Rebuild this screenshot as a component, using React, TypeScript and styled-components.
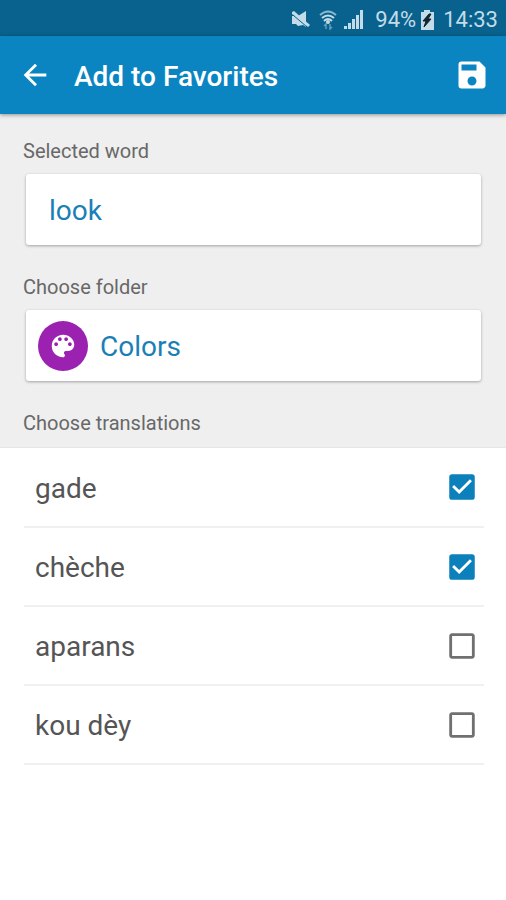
import React, { useState } from 'react';
import styled, { createGlobalStyle } from 'styled-components';
import {
  MdArrowBack,
  MdCheckBox,
  MdCheckBoxOutlineBlank,
  MdSave,
} from 'react-icons/md';

const GlobalStyle = createGlobalStyle`
  *, *::before, *::after { box-sizing: border-box; }
  body {
    margin: 0;
    background: #ffffff;
    font-family: Roboto, 'Liberation Sans', sans-serif;
  }
  button, input { font-family: inherit; }
`;

const Screen = styled.div`
  display: flex;
  flex-direction: column;
  min-height: 100vh;
  background: #ffffff;
`;

const StatusBar = styled.div`
  display: flex;
  align-items: center;
  justify-content: flex-end;
  height: 36px;
  padding: 3px 8px 0 0;
  background: #08628d;
  color: #c3dce8;
  font-size: 22px;
  line-height: 32px;

  svg { display: block; flex: none; }
`;

const StatusIcon = styled.span<{ $gap: number }>`
  margin-right: ${({ $gap }) => $gap}px;
`;

const StatusText = styled.span<{ $gap?: number }>`
  margin-right: ${({ $gap = 0 }) => $gap}px;
`;

const AppBar = styled.header`
  position: relative;
  display: flex;
  align-items: center;
  height: 78px;
  padding: 0 16px 0 17px;
  background: #0b85c1;
  color: #ffffff;
  box-shadow: 0 1px 4px rgba(0, 0, 0, 0.4);
`;

const IconButton = styled.button`
  display: grid;
  place-items: center;
  width: 36px;
  height: 48px;
  padding: 0;
  border: 0;
  background: none;
  color: inherit;
  cursor: pointer;
`;

const Title = styled.h1`
  flex: 1;
  margin: 0 0 0 21px;
  padding-top: 4px;
  font-size: 28px;
  font-weight: 500;
  line-height: 36px;
`;

const Form = styled.section`
  display: flex;
  flex-direction: column;
  gap: 30px;
  padding: 25px 23px 12px;
  background: #efefef;
  border-bottom: 1px solid #e6e6e6;
`;

const Field = styled.div`
  display: flex;
  flex-direction: column;
  gap: 11px;
`;

const labelStyle = `
  color: #686868;
  font-size: 20px;
  font-weight: 400;
  line-height: 24px;
`;

const FieldLabel = styled.label`
  ${labelStyle}
`;

const ListHeading = styled.h2`
  ${labelStyle}
  margin: 0;
`;

const cardStyle = `
  height: 71px;
  margin: 0 2px 0 3px;
  border: 0;
  border-radius: 3px;
  background: #ffffff;
  box-shadow: 0 1px 3px rgba(0, 0, 0, 0.32);
  color: #1b7fb6;
  font-size: 28px;
  line-height: 36px;
`;

const WordInput = styled.input`
  ${cardStyle}
  min-width: 0;
  padding: 2px 23px 0;
`;

const FolderButton = styled.button`
  ${cardStyle}
  display: flex;
  align-items: center;
  gap: 12px;
  padding: 0 12px;
  text-align: left;
  cursor: pointer;
`;

const FolderBadge = styled.span`
  display: grid;
  place-items: center;
  width: 50px;
  height: 50px;
  border-radius: 50%;
  background: #9b21b1;
  color: #ffffff;
`;

const FolderName = styled.span`
  padding-top: 2px;
`;

const TranslationList = styled.ul`
  margin: 0;
  padding: 0 22px 0 24px;
  list-style: none;
`;

const TranslationItem = styled.li`
  border-bottom: 2px solid #f0f0f0;
`;

const TranslationRow = styled.label`
  display: flex;
  align-items: center;
  justify-content: space-between;
  height: 78px;
  padding: 0 5px 0 11px;
  color: #555555;
  font-size: 28px;
  line-height: 36px;
  cursor: pointer;

  ${TranslationItem} + ${TranslationItem} & { height: 77px; }
`;

const TranslationWord = styled.span`
  padding-top: 3px;
`;

const CheckSlot = styled.span<{ $checked: boolean }>`
  display: grid;
  place-items: center;
  width: 34px;
  height: 34px;
  color: ${({ $checked }) => ($checked ? '#0b80bb' : '#707070')};

  > * { grid-area: 1 / 1; }
  svg { pointer-events: none; }
`;

const CheckInput = styled.input`
  width: 26px;
  height: 26px;
  margin: 0;
  appearance: none;
  cursor: pointer;
`;

const MutedIcon = () => (
  <svg width="18" height="20" viewBox="0 0 18 20" fill="currentColor" aria-hidden="true">
    <path d="M0 6h6l8-5v16l-3-2-5 1-2-2H0z" />
    <path d="M0 2l2-1 16 14-2 2L0 4z" />
    <path d="M1 5l14 12" stroke="#08628d" strokeWidth="1" />
  </svg>
);

const WifiIcon = () => (
  <svg width="18" height="20" viewBox="0 0 18 20" fill="none" stroke="currentColor" aria-hidden="true">
    <path d="M1 5Q9-2 17 5" strokeWidth="2" opacity="0.700" />
    <path d="M3 8q6-5 12 0" strokeWidth="2" />
    <path d="M5 11q4-4 8 0" strokeWidth="2" />
    <circle cx="9" cy="12" r="2" fill="currentColor" stroke="none" />
    <path d="M7 19v-5l-2 2M11 14v5l2-2" strokeWidth="1.500" opacity="0.500" />
  </svg>
);

const SignalIcon = () => (
  <svg width="19" height="20" viewBox="0 0 19 20" fill="currentColor" aria-hidden="true">
    <path d="M0 16h3v3H0zM4 13h3v6H4zM8 9h3v10H8zM12 5h3v14h-3zM16 0h3v19h-3z" />
  </svg>
);

const BatteryIcon = () => (
  <svg width="14" height="20" viewBox="0 0 14 20" aria-hidden="true">
    <path d="M4 0h6v2h4v18H1V2h3z" fill="currentColor" />
    <path d="M9 4L3 11h3l-2 6 7-8H8l3-5z" fill="#102530" stroke="#102530" />
  </svg>
);

const PaletteIcon = () => (
  <svg width="30" height="30" viewBox="0 0 24 24" fill="currentColor" aria-hidden="true">
    <path d="M12 3c-4.970 0-9 4.030-9 9s4.030 9 9 9c.830 0 1.500-.670 1.500-1.500 0-.390-.150-.740-.390-1.010-.230-.260-.380-.610-.380-.990 0-.830.670-1.500 1.500-1.500H16c2.760 0 5-2.240 5-5 0-4.420-4.030-8-9-8zm-5.500 9c-.830 0-1.500-.670-1.500-1.500S5.670 9 6.500 9 8 9.670 8 10.500 7.330 12 6.500 12zm3-4C8.670 8 8 7.330 8 6.500S8.670 5 9.500 5s1.500.670 1.500 1.500S10.330 8 9.500 8zm5 0c-.830 0-1.500-.670-1.500-1.500S13.670 5 14.500 5s1.500.670 1.500 1.500S15.330 8 14.500 8zm3 4c-.830 0-1.500-.670-1.500-1.500S16.670 9 17.500 9s1.500.670 1.500 1.500-.670 1.500-1.500 1.500z" />
  </svg>
);

const initialTranslations = [
  { word: 'gade', checked: true },
  { word: 'chèche', checked: true },
  { word: 'aparans', checked: false },
  { word: 'kou dèy', checked: false },
];

export default function App() {
  const [word, setWord] = useState('look');
  const [translations, setTranslations] = useState(initialTranslations);

  const toggle = (target: string) =>
    setTranslations((items) =>
      items.map((item) =>
        item.word === target ? { ...item, checked: !item.checked } : item,
      ),
    );

  return (
    <>
      <GlobalStyle />
      <Screen>
        <StatusBar>
          <StatusIcon $gap={9}><MutedIcon /></StatusIcon>
          <StatusIcon $gap={7}><WifiIcon /></StatusIcon>
          <StatusIcon $gap={12}><SignalIcon /></StatusIcon>
          <StatusText $gap={4}>94%</StatusText>
          <StatusIcon $gap={9}><BatteryIcon /></StatusIcon>
          <StatusText>14:33</StatusText>
        </StatusBar>
        <AppBar>
          <IconButton type="button" aria-label="Back">
            <MdArrowBack size={34} />
          </IconButton>
          <Title>Add to Favorites</Title>
          <IconButton type="button" aria-label="Save">
            <MdSave size={36} />
          </IconButton>
        </AppBar>
        <main>
          <Form>
            <Field>
              <FieldLabel htmlFor="word">Selected word</FieldLabel>
              <WordInput
                id="word"
                type="text"
                value={word}
                onChange={(event) => setWord(event.target.value)}
              />
            </Field>
            <Field>
              <FieldLabel htmlFor="folder">Choose folder</FieldLabel>
              <FolderButton id="folder" type="button">
                <FolderBadge>
                  <PaletteIcon />
                </FolderBadge>
                <FolderName>Colors</FolderName>
              </FolderButton>
            </Field>
            <ListHeading>Choose translations</ListHeading>
          </Form>
          <TranslationList>
            {translations.map((item) => (
              <TranslationItem key={item.word}>
                <TranslationRow>
                  <TranslationWord>{item.word}</TranslationWord>
                  <CheckSlot $checked={item.checked}>
                    <CheckInput
                      type="checkbox"
                      checked={item.checked}
                      onChange={() => toggle(item.word)}
                    />
                    {item.checked ? (
                      <MdCheckBox size={34} />
                    ) : (
                      <MdCheckBoxOutlineBlank size={34} />
                    )}
                  </CheckSlot>
                </TranslationRow>
              </TranslationItem>
            ))}
          </TranslationList>
        </main>
      </Screen>
    </>
  );
}
